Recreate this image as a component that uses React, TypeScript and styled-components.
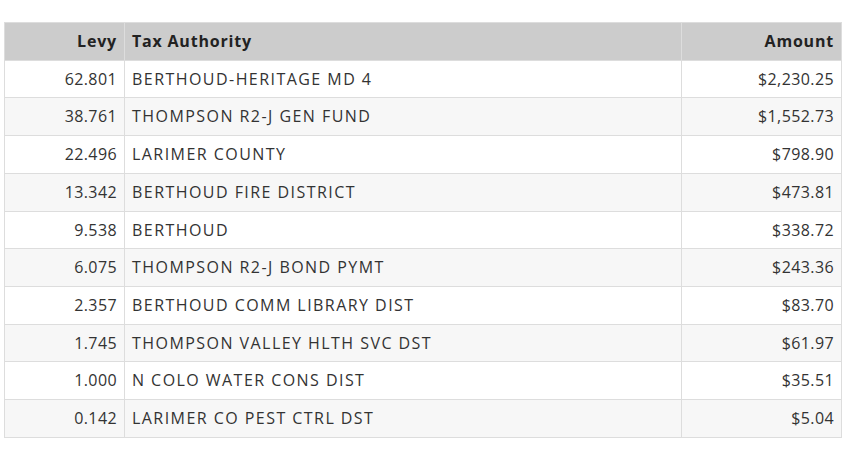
import React from "react";
import styled, { createGlobalStyle } from "styled-components";

const Global = createGlobalStyle`
  html, body { margin: 0; padding: 0; background: #ffffff; }
  body { font-family: "Open Sans", "Liberation Sans", sans-serif; }
`;

const Page = styled.div`
  padding: 22px 8px 0 4px;
`;

const Table = styled.table`
  width: 838px;
  border-collapse: collapse;
  font-size: 16px;
  color: #333333;
  letter-spacing: 0.4px;
`;

const HeadCell = styled.th<{ $align?: string; $w?: string }>`
  background: #cccccc;
  color: #222222;
  font-weight: 700;
  letter-spacing: 0.8px;
  text-align: ${(p) => p.$align || "left"};
  width: ${(p) => p.$w || "auto"};
  padding: 8px 7px 8px 7px;
  line-height: 20.7px;
  border: 1px solid #dddddd;
`;

const Row = styled.tr<{ $alt: boolean }>`
  background: ${(p) => (p.$alt ? "#f7f7f7" : "#ffffff")};
`;

const Cell = styled.td<{ $align?: string; $wide?: boolean }>`
  text-align: ${(p) => p.$align || "left"};
  letter-spacing: ${(p) => (p.$wide ? "1.45px" : "0.4px")};
  padding: 8px 7px;
  line-height: 20.7px;
  border: 1px solid #dddddd;
  white-space: nowrap;
`;

const rows: [string, string, string][] = [
  ["62.801", "BERTHOUD-HERITAGE MD 4", "$2,230.25"],
  ["38.761", "THOMPSON R2-J GEN FUND", "$1,552.73"],
  ["22.496", "LARIMER COUNTY", "$798.90"],
  ["13.342", "BERTHOUD FIRE DISTRICT", "$473.81"],
  ["9.538", "BERTHOUD", "$338.72"],
  ["6.075", "THOMPSON R2-J BOND PYMT", "$243.36"],
  ["2.357", "BERTHOUD COMM LIBRARY DIST", "$83.70"],
  ["1.745", "THOMPSON VALLEY HLTH SVC DST", "$61.97"],
  ["1.000", "N COLO WATER CONS DIST", "$35.51"],
  ["0.142", "LARIMER CO PEST CTRL DST", "$5.04"],
];

export default function App() {
  return (
    <>
      <Global />
      <Page>
        <Table>
          <thead>
            <tr>
              <HeadCell $align="right" $w="105px">Levy</HeadCell>
              <HeadCell>Tax Authority</HeadCell>
              <HeadCell $align="right" $w="145px">Amount</HeadCell>
            </tr>
          </thead>
          <tbody>
            {rows.map((r, i) => (
              <Row key={r[1]} $alt={i % 2 === 1}>
                <Cell $align="right">{r[0]}</Cell>
                <Cell $wide>{r[1]}</Cell>
                <Cell $align="right">{r[2]}</Cell>
              </Row>
            ))}
          </tbody>
        </Table>
      </Page>
    </>
  );
}
